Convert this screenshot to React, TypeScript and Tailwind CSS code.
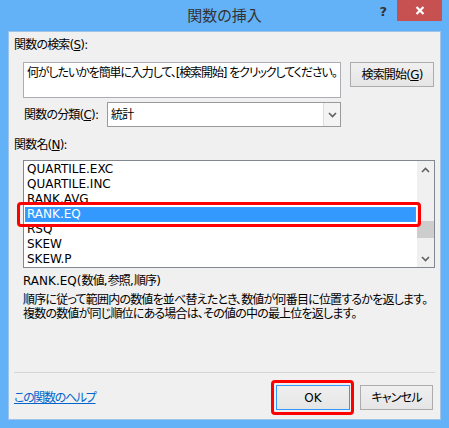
import React from "react";

const FONT =
  "font-['DejaVu_Sans','Noto_Sans_CJK_JP',sans-serif] [font-feature-settings:'palt']";

// Japanese text runs a little tighter than the default CJK advance
const JP = "tracking-[-0.8px]";

const Chevron = ({ dir }: { dir: "up" | "down" }) => (
  <svg width="9" height="6" viewBox="0 0 9 6">
    <polyline
      points={dir === "up" ? "1,5 4.5,1.5 8,5" : "1,1 4.5,4.5 8,1"}
      fill="none"
      stroke="#606060"
      strokeWidth="1.6"
    />
  </svg>
);

const FUNCTIONS = [
  "QUARTILE.EXC",
  "QUARTILE.INC",
  "RANK.AVG",
  "RANK.EQ",
  "RSQ",
  "SKEW",
  "SKEW.P",
];

const SELECTED = "RANK.EQ";

const btn =
  "flex items-center justify-center h-[25px] text-[12px] text-black bg-gradient-to-b from-[#f0f0f0] to-[#e5e5e5]";

export default function App() {
  return (
    <div
      className={`w-[449px] h-[428px] bg-[#63b2f8] flex flex-col ${FONT} text-[12px] text-black`}
    >
      {/* title bar */}
      <div className="h-[31px] grid grid-cols-[1fr_auto_1fr]">
        <div />
        <div className="flex items-center text-[15px] text-[#333] leading-none pt-[1px]">
          関数の挿入
        </div>
        <div className="flex justify-end items-start">
          <span className="mt-[4px] mr-[10px] text-[13px] font-bold text-[#333] leading-[16px]">
            ?
          </span>
          <div className="w-[45px] h-[21px] mr-[7px] bg-[#c75050] flex items-center justify-center">
            <svg width="10" height="9" viewBox="0 0 10 9">
              <path d="M1.5 1 L8.5 8 M8.5 1 L1.5 8" stroke="#fff" strokeWidth="2.2" />
            </svg>
          </div>
        </div>
      </div>

      {/* client area */}
      <div className="flex-1 mx-[8px] mb-[8px] bg-[#f0f0f0] border border-[#9fc4ea] flex flex-col">
        <div className={`mt-[6px] h-[14px] leading-[14px] pl-[5px] ${JP}`}>
          関数の検索(<u>S</u>):
        </div>

        <div className="mt-[10px] flex pl-[14px]">
          <div className="w-[318px] h-[36px] bg-white border border-[#abadb3] pl-[3px] pt-[3px] leading-[14px] whitespace-nowrap overflow-hidden tracking-[-1.1px]">
            何がしたいかを簡単に入力して、[検索開始] をクリックしてください。
          </div>
          <div className={`${btn} ml-[9px] w-[84px] border border-[#acacac] ${JP}`}>
            検索開始(<u>G</u>)
          </div>
        </div>

        <div className="mt-[4px] flex items-center pl-[15px]">
          <div className={`w-[83px] leading-[14px] ${JP}`}>
            関数の分類(<u>C</u>):
          </div>
          <div className="w-[234px] h-[25px] bg-white border border-[#9a9a9a] flex">
            <div className={`flex-1 pl-[3px] flex items-center ${JP}`}>統計</div>
            <div className="w-[17px] border-l border-[#dcdcdc] bg-[#f4f4f4] flex items-center justify-center">
              <Chevron dir="down" />
            </div>
          </div>
        </div>

        <div className={`mt-[11px] h-[14px] leading-[14px] pl-[5px] ${JP}`}>
          関数名(<u>N</u>):
        </div>

        {/* function list */}
        <div className="mt-[8px] ml-[14px] w-[412px] h-[108px] bg-white border border-[#828790] flex">
          <div className="flex-1 pt-[1px] px-[1px]">
            {FUNCTIONS.map((name) =>
              name === SELECTED ? (
                <div key={name} className="relative h-[15px]">
                  <div className="h-[15px] leading-[13px] pl-[1px] bg-[#3399ff] text-white border border-dotted border-[#b98a4a]">
                    {name}
                  </div>
                  <span className="absolute -left-[8px] -right-[5px] -top-[5px] -bottom-[5px] border-[3px] border-[#ff0000] rounded-[4px]" />
                </div>
              ) : (
                <div key={name} className="h-[15px] leading-[15px] pl-[2px]">
                  {name}
                </div>
              )
            )}
          </div>
          <div className="w-[17px] bg-[#f0f0f0] flex flex-col">
            <div className="h-[17px] flex items-center justify-center">
              <Chevron dir="up" />
            </div>
            <div className="flex-1">
              <div className="mt-[43px] h-[17px] bg-[#cdcdcd]" />
            </div>
            <div className="h-[17px] flex items-center justify-center">
              <Chevron dir="down" />
            </div>
          </div>
        </div>

        <div className="mt-[6px] h-[14px] leading-[14px] pl-[14px]">
          RANK.EQ(<span className={JP}>数値</span>,<span className={JP}>参照</span>,
          <span className={JP}>順序</span>)
        </div>
        <div className={`mt-[5px] leading-[14px] pl-[14px] whitespace-nowrap ${JP}`}>
          <div>
            順序に従って範囲内の数値を並べ替えたとき、数値が何番目に位置するかを返します。
          </div>
          <div>複数の数値が同じ順位にある場合は、その値の中の最上位を返します。</div>
        </div>

        <div className="flex-1" />
        <div className="mx-[5px] h-px bg-[#d5d5d5]" />

        {/* footer */}
        <div className="mt-[12px] mb-[9px] flex items-center pl-[5px] pr-[7px]">
          <span className="text-[#0066cc] underline leading-[14px] tracking-[-1.3px]">
            この関数のヘルプ
          </span>
          <div className="flex-1" />
          <div className="relative">
            <div className={`${btn} w-[74px] border border-[#3399ff]`}>OK</div>
            <span className="absolute -left-[5px] -right-[4px] -top-[5px] -bottom-[5px] border-[3px] border-[#ff0000] rounded-[4px]" />
          </div>
          <div className={`${btn} ml-[10px] w-[73px] border border-[#acacac] ${JP}`}>
            キャンセル
          </div>
        </div>
      </div>
    </div>
  );
}
